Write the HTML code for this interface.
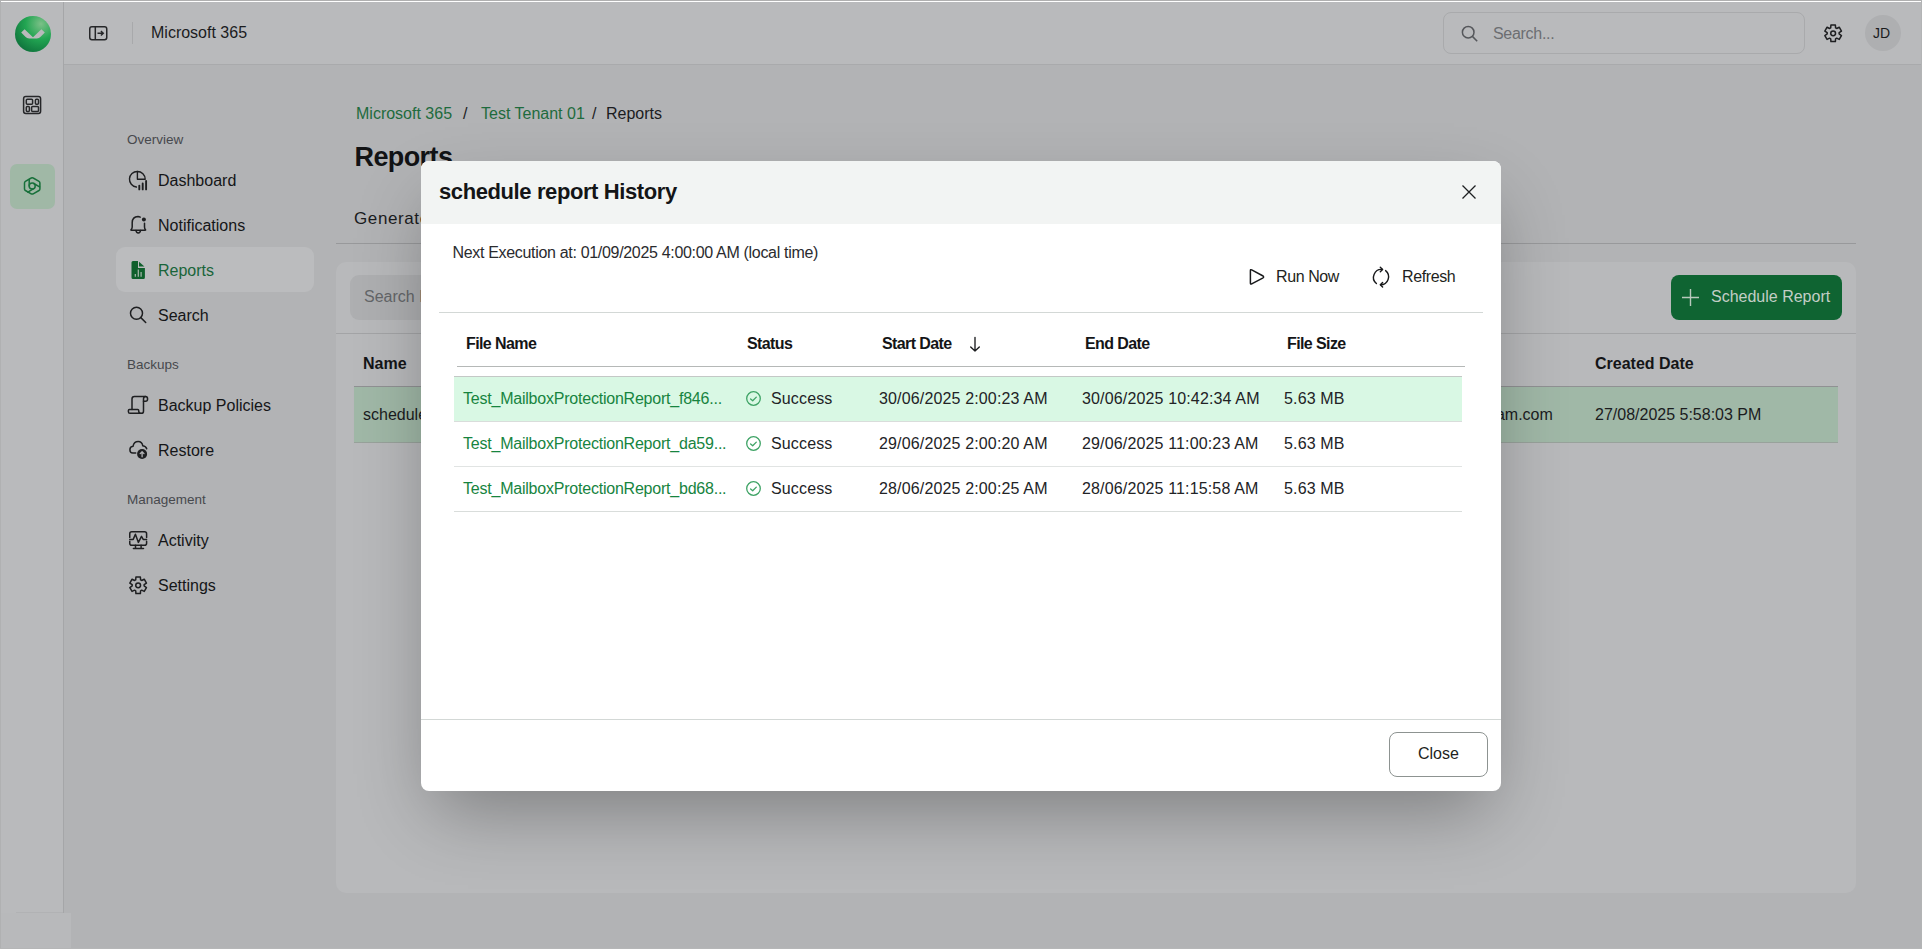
<!DOCTYPE html>
<html><head><meta charset="utf-8">
<style>
*{box-sizing:border-box;margin:0;padding:0}
html,body{width:1922px;height:949px;overflow:hidden}
body{font-family:"Liberation Sans",sans-serif;background:#b2b3b5;color:#1b1c1e;position:relative}
.abs{position:absolute}
.t{position:absolute;white-space:nowrap;line-height:1}
svg{position:absolute;overflow:visible}
#row0{left:0;top:0;width:1922px;height:1px;background:#b0b0b0}
#topline{left:1px;top:1px;width:1920px;height:1px;background:#fff}
#colR{left:1921px;top:0;width:1px;height:949px;background:#b3b4b5}
#rowB{left:0;top:948px;width:1922px;height:1px;background:#b5b6b7}
#rail{left:0;top:2px;width:64px;height:911px;background:#b9babc;border-right:1px solid #a5a6a8}
#railbot{left:0;top:913px;width:71px;height:35px;background:#b8b9bb}
#col0{left:0;top:0;width:1px;height:949px;background:#b0b1b2}
#header{left:64px;top:2px;width:1858px;height:63px;background:#b9babc;border-bottom:1px solid #a9aaac}
#card{left:336px;top:262px;width:1520px;height:631px;background:#b8b9bb;border-radius:10px}
.nav{font-size:16px;color:#151618}
.sec{font-size:13.5px;color:#47494d}
.th{font-size:16px;font-weight:bold;color:#141517;letter-spacing:-0.6px}
.td{font-size:16px;color:#222326;letter-spacing:0.15px}
.lnk{color:#17843f;letter-spacing:-0.22px}
</style></head>
<body>
<div id="row0" class="abs"></div>
<div id="topline" class="abs"></div>
<div id="rail" class="abs"></div>
<div id="railbot" class="abs"></div>
<div class="abs" style="left:16px;top:912px;width:47px;height:1px;background:#b1b2b4"></div>
<div id="header" class="abs"></div>

<!-- logo -->
<svg style="left:15px;top:16px" width="36" height="36" viewBox="0 0 36 36">
  <defs>
    <radialGradient id="lg" cx="0.72" cy="0.22" r="0.95">
      <stop offset="0" stop-color="#7cc088"/>
      <stop offset="0.45" stop-color="#22a552"/>
      <stop offset="1" stop-color="#0b6a38"/>
    </radialGradient>
  </defs>
  <circle cx="18" cy="18" r="18" fill="url(#lg)"/>
  <path d="M6.2 16.6 L9.6 13.2 L18 21.2 L26.4 13.2 L29.8 16.6 L25.6 20.8 Q24.2 22.4 21.8 22.4 L14.2 22.4 Q11.8 22.4 10.4 20.8 Z" fill="#b9babc"/>
</svg>
<!-- rail icons -->
<svg style="left:18px;top:91px" width="28" height="28" viewBox="0 0 28 28" fill="none" stroke="#262729" stroke-width="1.5">
  <rect x="5.6" y="5.6" width="17" height="16.8" rx="2.2"/>
  <rect x="8.3" y="8.3" width="6.3" height="5" rx="1"/>
  <rect x="17.4" y="8.3" width="3.1" height="5" rx="1"/>
  <rect x="8.3" y="15.5" width="3.1" height="4.9" rx="1"/>
  <rect x="13.6" y="15.5" width="6.9" height="4.9" rx="1"/>
</svg>
<div class="abs" style="left:10px;top:164px;width:45px;height:45px;border-radius:7px;background:#a0b8a6"></div>
<svg style="left:18px;top:172px" width="28" height="28" viewBox="0 0 28 28" fill="none" stroke="#17703a" stroke-width="1.5" stroke-linecap="round" stroke-linejoin="round">
  <path d="M13.2 6 Q14.2 5.4 15.2 6 L21 9.3 Q21.9 9.8 21.9 10.9 V17 Q21.9 18 21 18.5 L15.2 21.8 Q14.2 22.4 13.2 21.8 L7.4 18.5 Q6.5 18 6.5 17 V10.9 Q6.5 9.8 7.4 9.3 Z"/>
  <circle cx="14.2" cy="14.1" r="3"/>
  <path d="M11.2 14.1 V7.6"/>
  <path d="M15.7 11.5 L21.6 14.9"/>
  <path d="M15.7 16.7 L9.9 20.1"/>
</svg>

<!-- header -->
<svg style="left:89px;top:26px" width="19" height="15" viewBox="0 0 19 15" fill="none" stroke="#262729" stroke-width="1.5">
  <rect x="0.75" y="0.75" width="17" height="13" rx="2.2"/>
  <path d="M6.3 0.75 V13.75"/>
  <path d="M8.5 7.3 H14.3 M11.9 5 L14.3 7.3 L11.9 9.6" stroke-width="1.4"/>
</svg>
<div class="abs" style="left:132px;top:22px;width:1px;height:22px;background:#a8a9ab"></div>
<div class="t" style="left:151px;top:25px;font-size:16px;color:#1b1c1e">Microsoft 365</div>

<div class="abs" style="left:1443px;top:12px;width:362px;height:42px;border:1px solid #a9aaac;border-radius:8px;background:#b9babc"></div>
<svg style="left:1461px;top:25px" width="18" height="18" viewBox="0 0 18 18" fill="none" stroke="#55575b" stroke-width="1.5">
  <circle cx="7.2" cy="7.2" r="5.8"/><path d="M11.4 11.4 L16.2 16.2"/>
</svg>
<div class="t" style="left:1493px;top:26px;font-size:16px;letter-spacing:-0.3px;color:#6c6e72">Search...</div>
<svg style="left:1819px;top:19px" width="28" height="28" viewBox="0 0 28 28" fill="none" stroke="#1e1f21" stroke-width="1.5" stroke-linejoin="round">
  <path d="M11.71 8.82 L11.92 5.99 L16.38 5.99 L16.59 8.82 L17.68 9.45 L20.23 8.22 L22.46 12.07 L20.12 13.67 L20.12 14.93 L22.46 16.53 L20.23 20.38 L17.68 19.15 L16.59 19.78 L16.38 22.61 L11.92 22.61 L11.71 19.78 L10.62 19.15 L8.07 20.38 L5.84 16.53 L8.18 14.93 L8.18 13.67 L5.84 12.07 L8.07 8.22 L10.62 9.45 Z"/>
  <circle cx="14.15" cy="14.3" r="2.4"/>
</svg>
<div class="abs" style="left:1865px;top:15px;width:36px;height:36px;border-radius:50%;background:#aeafb1"></div>
<div class="t" style="left:1873px;top:26px;font-size:14px;color:#1b1c1e">JD</div>


<!-- nav icons -->
<div class="abs" style="left:116px;top:247px;width:198px;height:45px;border-radius:9px;background:#bbbcbe"></div>

<svg style="left:125px;top:166px" width="28" height="28" viewBox="0 0 28 28" fill="none" stroke="#1e1f21" stroke-width="1.4" stroke-linecap="round" stroke-linejoin="round">
  <path d="M12.4 5.5 A7.8 7.8 0 0 0 11.4 21.05"/>
  <path d="M12.4 5.5 V13.3 H20.2 A7.8 7.8 0 0 0 12.4 5.5 Z"/>
  <path d="M14.3 19.6 V23.4 M17.7 17.4 V23.4 M21.1 15 V23.4" stroke-width="1.9"/>
</svg>
<svg style="left:125px;top:211px" width="28" height="28" viewBox="0 0 28 28" fill="none" stroke="#1e1f21" stroke-width="1.5" stroke-linecap="round" stroke-linejoin="round">
  <path d="M15.2 6.1 Q14.2 5.5 13 5.5 Q7.4 5.7 7.2 11.5 V16 Q7.2 17.6 6 18.7 Q5.6 19.2 6.4 19.2 H20.1 Q20.9 19.2 20.5 18.7 Q19.5 17.6 19.5 16 V12.3"/>
  <path d="M11 19.5 Q11.2 21.9 13.25 21.9 Q15.3 21.9 15.5 19.5"/>
  <circle cx="18.9" cy="8.5" r="2" fill="#1e1f21" stroke="none"/>
</svg>
<svg style="left:125px;top:256px" width="28" height="28" viewBox="0 0 28 28">
  <path d="M8 5 H13 V11.9 H19.9 V21.5 Q19.9 23 18.4 23 H8 Q6.5 23 6.5 21.5 V6.5 Q6.5 5 8 5 Z" fill="#0f5f2c"/>
  <path d="M14 5.8 L19.4 10.6 H14 Z" fill="#0f5f2c"/>
  <path d="M10.3 18 V20.8 M13.3 13.6 V20.8 M16.1 15.9 V20.8" stroke="#a9b8ad" stroke-width="1.2"/>
</svg>
<svg style="left:125px;top:301px" width="28" height="28" viewBox="0 0 28 28" fill="none" stroke="#1e1f21" stroke-width="1.5" stroke-linecap="round">
  <circle cx="11.5" cy="12.3" r="6"/>
  <path d="M15.8 16.6 L20.7 21.5"/>
</svg>
<svg style="left:124px;top:391px" width="28" height="28" viewBox="0 0 28 28" fill="none" stroke="#1e1f21" stroke-width="1.5" stroke-linecap="round" stroke-linejoin="round">
  <path d="M8 18.6 V8 Q8 5.6 10.4 5.6 H21.5 Q23.6 5.6 23.6 7.9 Q23.6 10.2 21.5 10.2 H19.5"/>
  <path d="M21.5 5.6 Q19.5 5.6 19.5 7.9 V20.2 Q19.5 22.3 17.3 22.3 Q14.9 22.3 14.7 20.2 V19.6 Q14.7 18.6 13.7 18.6 H5.4 Q4.4 18.6 4.4 19.6 V20.7 Q4.4 22.3 6 22.3 H17.3"/>
</svg>
<svg style="left:124px;top:436px" width="28" height="28" viewBox="0 0 28 28" fill="none" stroke="#1e1f21" stroke-width="1.5" stroke-linecap="round" stroke-linejoin="round">
  <path d="M11.7 17.1 H8.8 Q5.9 17.1 5.9 13.8 Q5.9 10.6 9 10.3 Q10 5.6 14.2 5.6 Q18 5.6 18.8 9.8 Q22 10.3 22.7 12.8"/>
  <circle cx="18.1" cy="18" r="5" fill="#1e1f21" stroke="none"/>
  <path d="M18.1 20.8 V15.7 M16.2 17.6 L18.1 15.7 L20 17.6" stroke="#b3b4b6" stroke-width="1.3"/>
</svg>
<svg style="left:124px;top:526px" width="28" height="28" viewBox="0 0 28 28" fill="none" stroke="#1e1f21" stroke-width="1.5" stroke-linecap="round" stroke-linejoin="round">
  <path d="M5.75 11.5 V7.8 Q5.75 5.75 7.8 5.75 H20.55 Q22.6 5.75 22.6 7.8 V11.5"/>
  <path d="M5.75 15.3 V17.15 Q5.75 19.2 7.8 19.2 H20.55 Q22.6 19.2 22.6 17.15 V15.3"/>
  <path d="M5.75 13.4 H9.2 L11.4 8.3 L14.4 16.4 L17.5 10.4 L19.2 13.4 H22.6"/>
  <path d="M11.5 19.2 V22.5 M17.1 19.2 V22.5 M9.4 22.6 H19.5"/>
</svg>
<svg style="left:124px;top:571px" width="28" height="28" viewBox="0 0 28 28" fill="none" stroke="#1e1f21" stroke-width="1.5" stroke-linejoin="round">
  <path d="M11.71 8.82 L11.92 5.99 L16.38 5.99 L16.59 8.82 L17.68 9.45 L20.23 8.22 L22.46 12.07 L20.12 13.67 L20.12 14.93 L22.46 16.53 L20.23 20.38 L17.68 19.15 L16.59 19.78 L16.38 22.61 L11.92 22.61 L11.71 19.78 L10.62 19.15 L8.07 20.38 L5.84 16.53 L8.18 14.93 L8.18 13.67 L5.84 12.07 L8.07 8.22 L10.62 9.45 Z"/>
  <circle cx="14.15" cy="14.3" r="2.4"/>
</svg>

<!-- nav -->
<div class="t sec" style="left:127px;top:133px">Overview</div>
<div class="t nav" style="left:158px;top:173px">Dashboard</div>
<div class="t nav" style="left:158px;top:218px">Notifications</div>
<div class="t nav" style="left:158px;top:263px;color:#19653a">Reports</div>
<div class="t nav" style="left:158px;top:308px">Search</div>
<div class="t sec" style="left:127px;top:358px">Backups</div>
<div class="t nav" style="left:158px;top:398px">Backup Policies</div>
<div class="t nav" style="left:158px;top:443px">Restore</div>
<div class="t sec" style="left:127px;top:493px">Management</div>
<div class="t nav" style="left:158px;top:533px">Activity</div>
<div class="t nav" style="left:158px;top:578px">Settings</div>

<!-- page -->
<div class="t" style="left:356px;top:106px;font-size:16px;color:#1e6b3d">Microsoft 365</div>
<div class="t" style="left:463px;top:106px;font-size:16px;color:#1b1c1e">/</div>
<div class="t" style="left:481px;top:106px;font-size:16px;color:#1e6b3d">Test Tenant 01</div>
<div class="t" style="left:592px;top:106px;font-size:16px;color:#1b1c1e">/</div>
<div class="t" style="left:606px;top:106px;font-size:16px;color:#1b1c1e">Reports</div>
<div class="t" style="left:354.5px;top:143.6px;font-size:27px;font-weight:bold;letter-spacing:-0.6px;color:#121315">Reports</div>
<div class="t" style="left:354px;top:210px;font-size:17px;letter-spacing:0.6px;color:#1b1c1e">Generate Report</div>
<div class="abs" style="left:336px;top:243px;width:1520px;height:1px;background:#98999b"></div>

<div id="card" class="abs"></div>
<div class="abs" style="left:350px;top:275px;width:360px;height:45px;border-radius:9px;background:#aeafb1"></div>
<div class="t" style="left:364px;top:289px;font-size:16px;color:#646669">Search Reports...</div>
<div class="abs" style="left:1671px;top:275px;width:171px;height:45px;border-radius:8px;background:#0f6432"></div>
<svg style="left:1682px;top:289px" width="17" height="17" viewBox="0 0 17 17" stroke="#b9c9bd" stroke-width="1.4"><path d="M8.5 0 V17 M0 8.5 H17"/></svg>
<div class="t" style="left:1711px;top:289px;font-size:16px;color:#c3cec6">Schedule Report</div>
<div class="abs" style="left:336px;top:333px;width:1520px;height:1px;background:#a3a4a6"></div>
<div class="t" style="left:363px;top:356px;font-size:16px;font-weight:bold;color:#141517">Name</div>
<div class="t" style="left:1595px;top:356px;font-size:16px;font-weight:bold;color:#141517">Created Date</div>
<div class="abs" style="left:354px;top:386px;width:1484px;height:1px;background:#909193"></div>
<div class="abs" style="left:354px;top:387px;width:1484px;height:56px;background:#a0b8a7;border-bottom:1px solid #98a29b"></div>
<div class="t" style="left:363px;top:407px;font-size:16px;color:#1b1c1e">schedule report</div>
<div class="t" style="left:1437px;top:407px;font-size:16px;color:#1b1c1e">test@exam.com</div>
<div class="t" style="left:1595px;top:407px;font-size:16px;color:#1b1c1e">27/08/2025 5:58:03 PM</div>


<!-- modal -->
<div class="abs" style="left:421px;top:161px;width:1080px;height:630px;border-radius:8px;background:#fff;box-shadow:0 30px 70px -12px rgba(0,0,0,0.32);overflow:hidden">
  <div class="abs" style="left:0;top:0;width:1080px;height:63px;background:#f2f4f3"></div>
</div>
<div class="t" style="left:439px;top:181px;font-size:22px;font-weight:bold;letter-spacing:-0.4px;color:#141517">schedule report History</div>
<svg style="left:1462px;top:185px" width="14" height="14" viewBox="0 0 14 14" stroke="#1e1f21" stroke-width="1.3"><path d="M0.5 0.5 L13.5 13.5 M13.5 0.5 L0.5 13.5"/></svg>
<div class="t" style="left:452.5px;top:245.4px;font-size:16px;letter-spacing:-0.32px;color:#2a2b2e">Next Execution at: 01/09/2025 4:00:00 AM (local time)</div>
<svg style="left:1242px;top:262px" width="30" height="30" viewBox="0 0 30 30" fill="none" stroke="#18191b" stroke-width="1.5" stroke-linejoin="round"><path d="M8.4 8.7 Q8.4 7.2 9.7 7.9 L21.1 14 Q22.1 14.9 21.1 15.8 L9.7 21.9 Q8.4 22.6 8.4 21.1 Z"/></svg>
<div class="t" style="left:1276px;top:268.7px;font-size:16px;letter-spacing:-0.4px;color:#1e1f21">Run Now</div>
<svg style="left:1366px;top:262px" width="30" height="30" viewBox="0 0 30 30" fill="none" stroke="#18191b" stroke-width="1.4" stroke-linecap="round" stroke-linejoin="round">
  <path d="M10.4 21.5 A8 8 0 0 1 16.4 7.4"/>
  <path d="M14.3 5.2 L16.6 7.4 L14.3 9.7"/>
  <path d="M19.6 8.6 A8 8 0 0 1 14.6 22.8"/>
  <path d="M16.6 20.4 L14.3 22.8 L16.6 25.1"/>
</svg>
<div class="t" style="left:1402px;top:268.7px;font-size:16px;letter-spacing:-0.4px;color:#1e1f21">Refresh</div>
<div class="abs" style="left:439px;top:312px;width:1044px;height:1px;background:#d3d8d6"></div>

<div class="t th" style="left:466px;top:336px">File Name</div>
<div class="t th" style="left:747px;top:336px">Status</div>
<div class="t th" style="left:882px;top:336px">Start Date</div>
<svg style="left:968.5px;top:336px" width="12" height="16" viewBox="0 0 12 16" fill="none" stroke="#1b1c1e" stroke-width="1.35" stroke-linecap="round" stroke-linejoin="round"><path d="M6 1.3 V15 M1.7 10.9 L6 15 L10.3 10.9"/></svg>
<div class="t th" style="left:1085px;top:336px">End Date</div>
<div class="t th" style="left:1287px;top:336px">File Size</div>
<div class="abs" style="left:457px;top:366px;width:1008px;height:1px;background:#b5b8b7"></div>

<div class="abs" style="left:454px;top:376px;width:1008px;height:1px;background:#c4c8c6"></div>
<div class="abs" style="left:454px;top:377px;width:1008px;height:44px;background:#d9f8e4"></div>
<div class="abs" style="left:454px;top:421px;width:1008px;height:1px;background:#d9dddb"></div>
<div class="abs" style="left:454px;top:466px;width:1008px;height:1px;background:#e1e4e3"></div>
<div class="abs" style="left:454px;top:511px;width:1008px;height:1px;background:#d9dddb"></div>
<div class="t td lnk" style="left:463px;top:390.5px">Test_MailboxProtectionReport_f846...</div>
<svg style="left:745.5px;top:391.2px" width="15" height="15" viewBox="0 0 15 15" fill="none" stroke="#3ea365" stroke-width="1.3" stroke-linecap="round" stroke-linejoin="round"><circle cx="7.5" cy="7.5" r="6.8"/><path d="M4.6 8 L6.7 9.7 L10.3 6.1"/></svg>
<div class="t td" style="left:771px;top:390.5px">Success</div>
<div class="t td" style="left:879px;top:390.5px">30/06/2025 2:00:23 AM</div>
<div class="t td" style="left:1082px;top:390.5px">30/06/2025 10:42:34 AM</div>
<div class="t td" style="left:1284px;top:390.5px">5.63 MB</div>
<div class="t td lnk" style="left:463px;top:435.5px">Test_MailboxProtectionReport_da59...</div>
<svg style="left:745.5px;top:436.2px" width="15" height="15" viewBox="0 0 15 15" fill="none" stroke="#3ea365" stroke-width="1.3" stroke-linecap="round" stroke-linejoin="round"><circle cx="7.5" cy="7.5" r="6.8"/><path d="M4.6 8 L6.7 9.7 L10.3 6.1"/></svg>
<div class="t td" style="left:771px;top:435.5px">Success</div>
<div class="t td" style="left:879px;top:435.5px">29/06/2025 2:00:20 AM</div>
<div class="t td" style="left:1082px;top:435.5px">29/06/2025 11:00:23 AM</div>
<div class="t td" style="left:1284px;top:435.5px">5.63 MB</div>
<div class="t td lnk" style="left:463px;top:480.5px">Test_MailboxProtectionReport_bd68...</div>
<svg style="left:745.5px;top:481.2px" width="15" height="15" viewBox="0 0 15 15" fill="none" stroke="#3ea365" stroke-width="1.3" stroke-linecap="round" stroke-linejoin="round"><circle cx="7.5" cy="7.5" r="6.8"/><path d="M4.6 8 L6.7 9.7 L10.3 6.1"/></svg>
<div class="t td" style="left:771px;top:480.5px">Success</div>
<div class="t td" style="left:879px;top:480.5px">28/06/2025 2:00:25 AM</div>
<div class="t td" style="left:1082px;top:480.5px">28/06/2025 11:15:58 AM</div>
<div class="t td" style="left:1284px;top:480.5px">5.63 MB</div>

<div class="abs" style="left:421px;top:719px;width:1080px;height:1px;background:#d3d8d6"></div>
<div class="abs" style="left:1389px;top:732px;width:99px;height:45px;border:1px solid #8d9391;border-radius:8px;background:#fff"></div>
<div class="t" style="left:1418px;top:746px;font-size:16px;color:#1e1f21">Close</div>
<div id="col0" class="abs"></div>
<div id="colR" class="abs"></div>
<div id="rowB" class="abs"></div>
</body></html>
